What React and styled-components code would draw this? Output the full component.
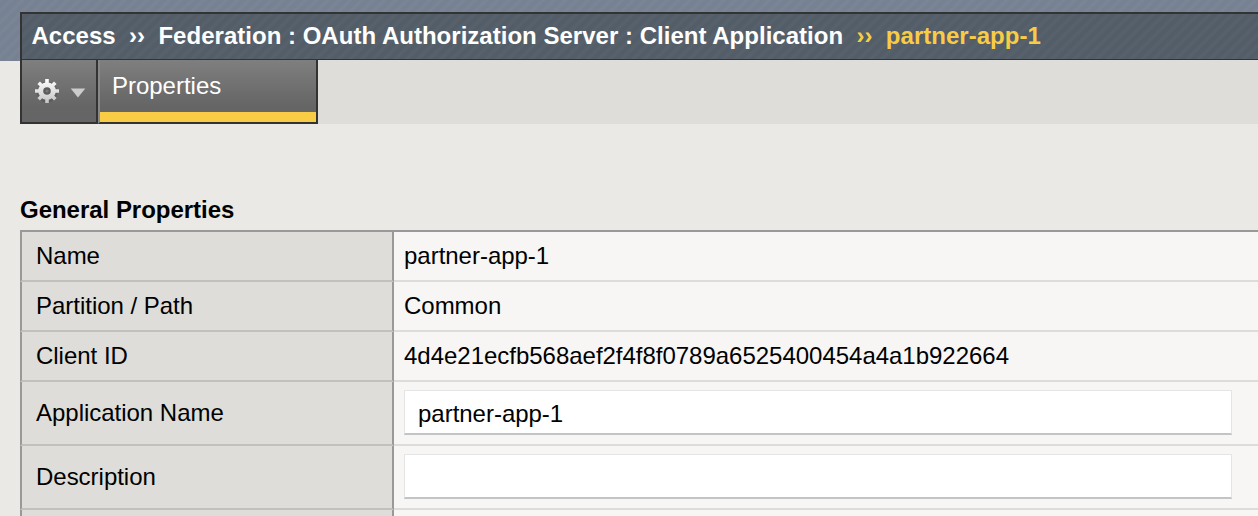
import React from "react";
import styled, { createGlobalStyle, css } from "styled-components";

const Global = createGlobalStyle`
  * { box-sizing: border-box; }
  html, body { margin: 0; height: 100%; overflow: hidden; }
  body {
    background: #eae9e5;
    font: 24px/28px "Liberation Sans", Arial, sans-serif;
    letter-spacing: -0.02px;
    color: #000;
  }
`;

const stripeImage = `repeating-linear-gradient(
  135deg,
  rgba(255, 255, 255, 0.025) 0,
  rgba(0, 0, 0, 0.01) 3px,
  rgba(0, 0, 0, 0.01) 5px,
  rgba(255, 255, 255, 0.025) 8px
)`;

const Page = styled.div`
  height: 516px;
  overflow: hidden;
  padding: 12px 0 0 20px;
  background-color: #eae9e5;
  background-image: ${stripeImage}, linear-gradient(#778394, #778394);
  background-size: 100% 61px;
  background-repeat: no-repeat;
`;

const Breadcrumb = styled.header`
  height: 48px;
  padding: 8px 0 0 9.5px;
  border: solid #333;
  border-width: 2px 0 1px 2px;
  background-color: #545e69;
  background-image: ${stripeImage};
  color: #fff;
  font-weight: bold;
  letter-spacing: 0.018px;
  white-space: pre;
`;

const Crumb = styled.span`
  color: ${(p) => (p.$current ? "#f8cc45" : "inherit")};
`;

const TabBar = styled.nav`
  height: 64px;
  display: flex;
  background: #deddd9;
`;

const panel = css`
  background: linear-gradient(#7f7f7f, #656565 75%, #656565);
  border-bottom: 2px solid #333;
  border-right: 2px solid #333;
`;

const MenuButton = styled.div`
  width: 78px;
  ${panel}
  border-left: 2px solid #333;
  display: flex;
  gap: 9px;
  padding: 17px 0 0 11px;
`;

const Tab = styled.div`
  width: 220px;
  ${panel}
  border-left: 2px solid #888;
  color: #fff;
  padding: 12px 0 0 12px;
  box-shadow: inset 0 -10px #f8cc45;
`;

const Title = styled.h2`
  margin: 72px 0 0;
  height: 34px;
  font-size: 24px;
  line-height: 28px;
`;

const Table = styled.div`
  border-top: 2px solid #999;
`;

const Row = styled.div`
  display: flex;
  height: ${(p) => (p.$tall ? 64 : 50)}px;
`;

const Label = styled.div`
  width: 374px;
  display: flex;
  align-items: center;
  padding-left: 14px;
  background: #deddd9;
  border: solid #999;
  border-width: 0 2px;
  border-bottom: 2px solid #c1c0bd;
`;

const Value = styled.div`
  flex: 1;
  display: flex;
  align-items: center;
  padding-left: 10px;
  background: #f7f6f5;
  border-bottom: 2px solid #dddcda;
`;

const Input = styled.input`
  width: 828px;
  height: 45px;
  margin-bottom: 1px;
  padding: 3px 13px 0;
  border: 1px solid #e5e5e5;
  border-bottom: 2px solid #c4c4c4;
  border-radius: 0;
  background: #fff;
  color: #000;
  font: inherit;
  letter-spacing: inherit;
  outline: none;
`;

function Gear() {
  return (
    <svg width="28" height="28" viewBox="-14 -14 28 28">
      <defs>
        <linearGradient id="metal" gradientUnits="userSpaceOnUse" x1="0" y1="-12" x2="0" y2="12">
          <stop stopColor="#fff" />
          <stop offset="1" stopColor="#c4c4c4" />
        </linearGradient>
      </defs>
      <circle cy="1" r="9" stroke="#444" strokeOpacity=".35" strokeWidth="3" fill="none" />
      <path
        fill="none"
        stroke="url(#metal)"
        strokeWidth="3.6"
        d="M-.01-12 .01 12M-12-.01 12 .01M-8.3-8.3 8.3 8.3M-8.3 8.3 8.3-8.3"
      />
      <circle r="8.8" fill="url(#metal)" />
      <circle r="3.8" fill="#5c5c5c" />
      <circle r="1.6" fill="#777" />
    </svg>
  );
}

function Caret() {
  return (
    <svg width="16" height="28" viewBox="0 0 16 28">
      <path d="M.7 11.5H15.3L8 20.5Z" fill="#ccc" />
    </svg>
  );
}

const rows = [
  { label: "Name", value: "partner-app-1" },
  { label: "Partition / Path", value: "Common" },
  { label: "Client ID", value: "4d4e21ecfb568aef2f4f8f0789a6525400454a4a1b922664" },
  { label: "Application Name", input: "partner-app-1" },
  { label: "Description", input: "" },
  { label: "", value: "" },
];

export default function App() {
  return (
    <>
      <Global />
      <Page>
        <Breadcrumb>
          <Crumb>{"Access  ››  Federation : OAuth Authorization Server : Client Application"}</Crumb>
          <Crumb $current>{"  ››  partner-app-1"}</Crumb>
        </Breadcrumb>
        <TabBar>
          <MenuButton>
            <Gear />
            <Caret />
          </MenuButton>
          <Tab>Properties</Tab>
        </TabBar>
        <Title>General Properties</Title>
        <Table>
          {rows.map((r) => (
            <Row key={r.label} $tall={r.input !== undefined}>
              <Label>{r.label}</Label>
              <Value>{r.input !== undefined ? <Input defaultValue={r.input} /> : r.value}</Value>
            </Row>
          ))}
        </Table>
      </Page>
    </>
  );
}
